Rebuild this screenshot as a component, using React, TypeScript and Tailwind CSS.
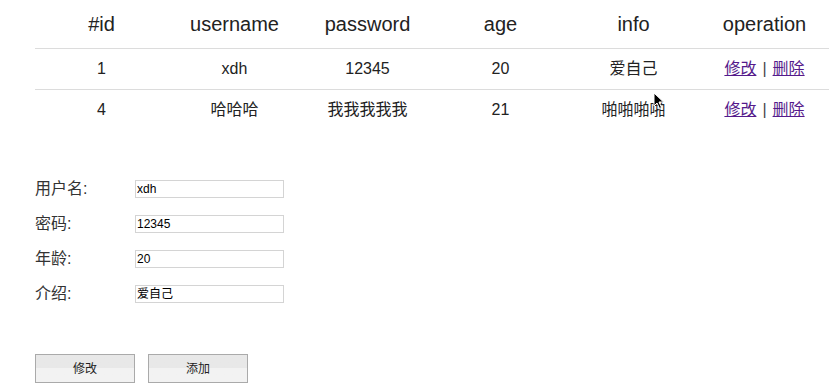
import React from "react"

interface User {
  id: number
  username: string
  password: string
  age: number
  info: string
}

const users: User[] = [
  { id: 1, username: "xdh", password: "12345", age: 20, info: "爱自己" },
  { id: 4, username: "哈哈哈", password: "我我我我我", age: 21, info: "啪啪啪啪" },
]

const fields = [
  { label: "用户名:", value: "xdh" },
  { label: "密码:", value: "12345" },
  { label: "年龄:", value: "20" },
  { label: "介绍:", value: "爱自己" },
]

const font = "font-['Liberation_Sans','Noto_Sans_CJK_SC',sans-serif]"

function Cursor() {
  return (
    <svg className="absolute left-[653px] top-[92px]" width="12" height="18" viewBox="0 0 12 18">
      <path d="M1 1 L1 14 L4 11 L6.5 16.5 L8.5 15.5 L6 10 L10.5 10 Z" fill="#000" stroke="#fff" strokeWidth="1" />
    </svg>
  )
}

export default function App() {
  return (
    <div className={`relative w-[829px] h-[392px] overflow-hidden bg-white text-[#222] ${font}`}>
      <table className="ml-[35px] w-[798px] table-fixed border-collapse">
        <thead>
          <tr className="h-[48px] text-[20px]">
            <th className="font-normal">#id</th>
            <th className="font-normal">username</th>
            <th className="font-normal">password</th>
            <th className="font-normal">age</th>
            <th className="font-normal">info</th>
            <th className="font-normal pr-[4px]">operation</th>
          </tr>
        </thead>
        <tbody>
          {users.map((u) => (
            <tr key={u.id} className="h-[41px] border-t border-[#dcdcdc] text-[16px] text-center">
              <td>{u.id}</td>
              <td>{u.username}</td>
              <td>{u.password}</td>
              <td>{u.age}</td>
              <td>{u.info}</td>
              <td className="pr-[4px]">
                <a href="#" className="text-[#551a8b] underline">修改</a>
                <span className="mx-[6px] text-[#444]">|</span>
                <a href="#" className="text-[#551a8b] underline">删除</a>
              </td>
            </tr>
          ))}
        </tbody>
      </table>

      <form className="ml-[35px] mt-[50px] flex flex-col gap-[17px]">
        {fields.map((f) => (
          <div key={f.label} className="flex items-center h-[18px]">
            <label className="w-[100px] text-[16px] text-[#333]">{f.label}</label>
            <input
              defaultValue={f.value}
              className="w-[149px] h-[18px] border border-[#d4d4d4] px-[1px] text-[12px] text-black outline-none"
            />
          </div>
        ))}
      </form>

      <div className="ml-[35px] mt-[51px] flex gap-[13px]">
        <button className="w-[100px] h-[29px] border border-[#aaa] bg-linear-to-b from-[#e8e8e8] from-50% to-[#f2f2f2] to-50% text-[12px] text-[#222]">
          修改
        </button>
        <button className="w-[100px] h-[29px] border border-[#aaa] bg-linear-to-b from-[#e8e8e8] from-50% to-[#f2f2f2] to-50% text-[12px] text-[#222]">
          添加
        </button>
      </div>

      <Cursor />
    </div>
  )
}
